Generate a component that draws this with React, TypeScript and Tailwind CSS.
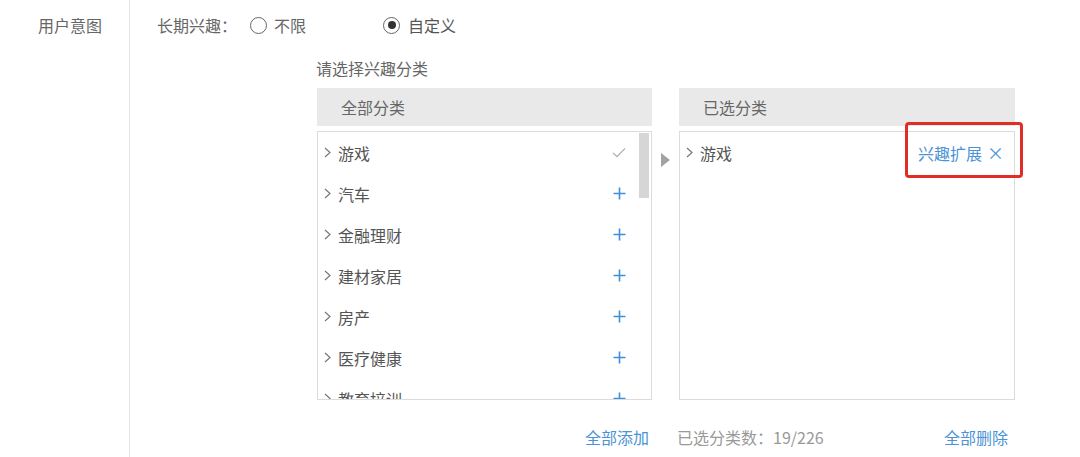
import React from "react";

const categories = ["游戏", "汽车", "金融理财", "建材家居", "房产", "医疗健康", "教育培训"];

function Chevron() {
  return (
    <svg width="7" height="11" viewBox="0 0 7 11" className="shrink-0">
      <polyline points="1,1 6,5.5 1,10" fill="none" stroke="#777" strokeWidth="1.2" />
    </svg>
  );
}

function PlusIcon() {
  return (
    <svg width="13" height="13" viewBox="0 0 13 13">
      <path d="M6.5 0.5v12M0.5 6.5h12" stroke="#3d8fd8" strokeWidth="1.6" />
    </svg>
  );
}

function CheckIcon() {
  return (
    <svg width="14" height="11" viewBox="0 0 14 11">
      <polyline points="1,6 5,9.5 13,1.5" fill="none" stroke="#b5b5b5" strokeWidth="1.3" />
    </svg>
  );
}

function Radio({ checked }: { checked?: boolean }) {
  return (
    <span className="flex h-[17px] w-[17px] items-center justify-center rounded-full border border-[#666]">
      {checked && <span className="h-[8px] w-[8px] rounded-full bg-[#333]" />}
    </span>
  );
}

export default function App() {
  return (
    <div
      className="flex h-[457px] w-[1080px] overflow-hidden bg-white text-[16px] text-[#666]"
      style={{ fontFamily: '"Noto Sans CJK SC", "Noto Sans", sans-serif' }}
    >
      {/* Label column */}
      <div className="w-[130px] shrink-0 border-r border-[#e6e6e6] pl-[38px] pt-[13px] leading-[24px]">
        用户意图
      </div>

      <div className="flex-1 pt-[13px]">
        {/* Long-term interest radios */}
        <div className="flex h-[24px] items-center pl-[27px] leading-[24px]">
          <span className="w-[93px]">长期兴趣：</span>
          <Radio />
          <span className="ml-[7px] w-[109px]">不限</span>
          <Radio checked />
          <span className="ml-[8px] text-[#555]">自定义</span>
        </div>

        <div className="ml-[186px] mt-[19px] leading-[24px]">请选择兴趣分类</div>

        {/* Transfer panels */}
        <div className="ml-[187px] mt-[8px] flex">
          <div className="w-[335px]">
            <div className="flex h-[38px] items-center bg-[#e9e9e9] pl-[24px] pb-[1px] text-[#666]">全部分类</div>
            <div className="relative mt-[5px] h-[269px] overflow-hidden border border-[#dcdcdc]">
              {categories.map((name, i) => (
                <div key={name} className="flex h-[41px] items-center pl-[6px] pr-[25px] text-[#555]">
                  <Chevron />
                  <span className="ml-[7px] flex-1">{name}</span>
                  {i === 0 ? <CheckIcon /> : <PlusIcon />}
                </div>
              ))}
              <div className="absolute right-[2px] top-[1px] h-[65px] w-[10px] bg-[#d6d6d6]" />
            </div>
          </div>

          <div className="flex w-[27px] justify-center pt-[65px]">
            <svg width="9" height="14" viewBox="0 0 9 14">
              <polygon points="0,0 9,7 0,14" fill="#a3a3a3" />
            </svg>
          </div>

          <div className="relative w-[336px]">
            <div className="flex h-[38px] items-center bg-[#e9e9e9] pl-[24px] pb-[1px] text-[#666]">已选分类</div>
            <div className="mt-[5px] h-[269px] border border-[#dcdcdc]">
              <div className="flex h-[41px] items-center pl-[6px] pr-[10px] text-[#555]">
                <Chevron />
                <span className="ml-[7px] flex-1">游戏</span>
                <span className="text-[#4b93d6]">兴趣扩展</span>
                <span className="ml-[5px] text-[17px] leading-none text-[#4b93d6]">×</span>
              </div>
            </div>
            <div className="absolute left-[226px] top-[34px] h-[56px] w-[118px] rounded-[4px] border-[3px] border-[#e12d28]" />
          </div>
        </div>

        {/* Footer actions */}
        <div className="ml-[187px] mt-[25px] flex leading-[24px]">
          <div className="w-[335px] pr-[3px] text-right text-[#4b93d6]">全部添加</div>
          <div className="w-[25px]" />
          <div className="flex w-[338px] justify-between pr-[7px]">
            <span className="text-[#999]">已选分类数：19/226</span>
            <span className="text-[#4b93d6]">全部删除</span>
          </div>
        </div>
      </div>
    </div>
  );
}
